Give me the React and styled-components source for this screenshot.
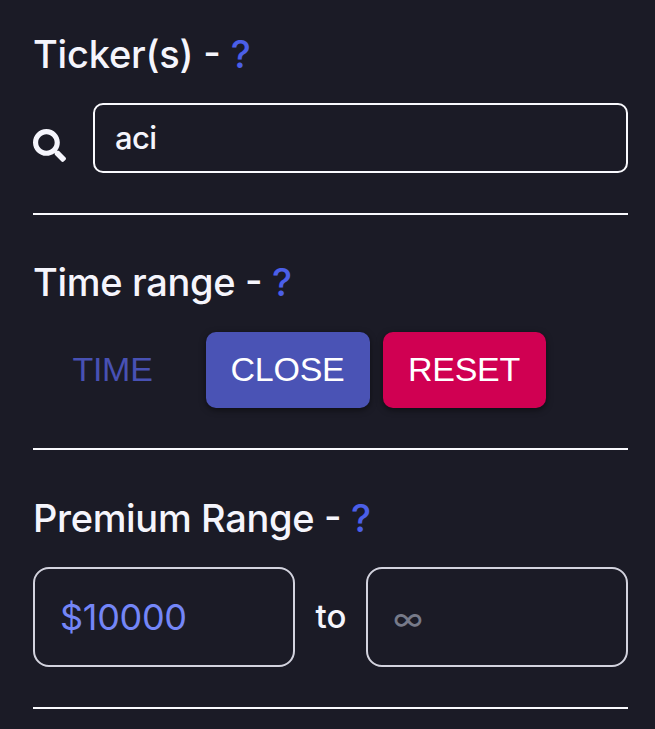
import React from "react";
import styled, { createGlobalStyle } from "styled-components";
import { FaSearch } from "react-icons/fa";

const GlobalStyle = createGlobalStyle`
  *, *::before, *::after { box-sizing: border-box; }
  body { margin: 0; background: #1b1b26; overflow: hidden; }
  input, button { font-family: inherit; margin: 0; }
`;

const Panel = styled.main`
  width: 655px;
  height: 729px;
  padding: 0 27px 0 33px;
  background: #1b1b26;
  color: #f5f5fc;
  font-family: Inter, "Liberation Sans", sans-serif;
`;

const Section = styled.section`
  height: ${(p) => p.$height}px;
  padding-top: ${(p) => p.$top}px;
  border-bottom: 2px solid #fafafe;
`;

const Heading = styled.h2`
  margin: 0;
  height: 48px;
  font-size: 38px;
  line-height: 48px;
  font-weight: 500;
  letter-spacing: ${(p) => p.$tracking || "-0.33px"};
  font-feature-settings: "calt" 1;
  white-space: nowrap;
`;

const Help = styled.span`
  color: #4b5fe8;
`;

const SearchRow = styled.div`
  display: flex;
  align-items: center;
  margin-top: 25px;
`;

const SearchIcon = styled(FaSearch)`
  width: 33px;
  height: 33px;
  margin: 14px 27px 0 0;
`;

const TickerInput = styled.input`
  flex: 1;
  min-width: 0;
  height: 70px;
  padding: 0 20px 1px;
  border: 2px solid #fafafe;
  border-radius: 10px;
  background: transparent;
  color: #f5f5fc;
  font-size: 31px;
  font-weight: 500;
  letter-spacing: -0.6px;
  outline: none;
`;

const ButtonRow = styled.div`
  display: flex;
  gap: 13px;
  margin-top: 26px;
`;

const Button = styled.button`
  width: ${(p) => p.$width}px;
  height: 76px;
  padding: 0 1px 2px 0;
  border: 0;
  border-radius: 10px;
  background: ${(p) => p.$bg || "transparent"};
  color: ${(p) => p.$color || "#fff"};
  box-shadow: ${(p) => (p.$bg ? "0 2px 6px rgba(0,0,0,.5)" : "none")};
  font-family: "Liberation Sans", Arial, sans-serif;
  font-size: 34px;
  font-weight: 400;
  letter-spacing: -0.25px;
`;

const RangeRow = styled.div`
  display: grid;
  grid-template-columns: 262px 71px 262px;
  align-items: center;
  margin-top: 25px;
`;

const RangeInput = styled.input`
  width: 100%;
  height: 100px;
  padding: 0 25px;
  border: 2px solid #d3d3de;
  border-radius: 16px;
  background: transparent;
  color: #7486f8;
  font-size: 36px;
  letter-spacing: -0.3px;
  outline: none;
  &::placeholder {
    color: #777a89;
    opacity: 1;
    font-size: 32px;
    font-weight: 400;
  }
`;

const To = styled.span`
  padding: 0 0 2px 1px;
  text-align: center;
  font-size: 33px;
  font-weight: 500;
`;

export default function App() {
  return (
    <>
      <GlobalStyle />
      <Panel>
        <Section $height={215} $top={30}>
          <Heading $tracking="-0.2px">Ticker(s) - <Help>?</Help></Heading>
          <SearchRow>
            <SearchIcon />
            <TickerInput defaultValue="aci" aria-label="Ticker" />
          </SearchRow>
        </Section>
        <Section $height={235} $top={43}>
          <Heading>Time range - <Help>?</Help></Heading>
          <ButtonRow>
            <Button $width={160} $color="#4851b3">TIME</Button>
            <Button $width={164} $bg="#4a53b5">CLOSE</Button>
            <Button $width={163} $bg="#d00052">RESET</Button>
          </ButtonRow>
        </Section>
        <Section $height={259} $top={44}>
          <Heading>Premium Range - <Help>?</Help></Heading>
          <RangeRow>
            <RangeInput defaultValue="$10000" aria-label="Minimum premium" />
            <To>to</To>
            <RangeInput placeholder="∞" aria-label="Maximum premium" />
          </RangeRow>
        </Section>
      </Panel>
    </>
  );
}
